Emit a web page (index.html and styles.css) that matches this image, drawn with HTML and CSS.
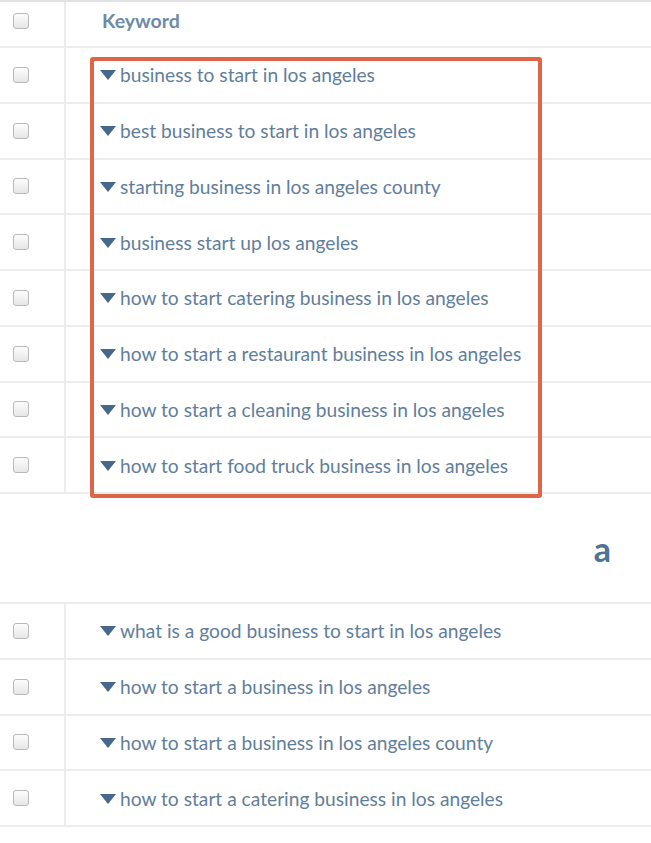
FILE: index.html
```html
<!DOCTYPE html>
<html>
<head>
<meta charset="utf-8">
<link rel="stylesheet" href="styles.css">
</head>
<body>
<div class="kw-table top">
  <div class="row head">
    <div class="cb-cell"><span class="cb"></span></div>
    <div class="kw-cell"><span class="head-label">Keyword</span></div>
  </div>
  <div class="rows">
    <div class="row"><div class="cb-cell"><span class="cb"></span></div><div class="kw-cell"><span class="tri"></span>business to start in los angeles</div></div>
    <div class="row"><div class="cb-cell"><span class="cb"></span></div><div class="kw-cell"><span class="tri"></span>best business to start in los angeles</div></div>
    <div class="row"><div class="cb-cell"><span class="cb"></span></div><div class="kw-cell"><span class="tri"></span>starting business in los angeles county</div></div>
    <div class="row"><div class="cb-cell"><span class="cb"></span></div><div class="kw-cell"><span class="tri"></span>business start up los angeles</div></div>
    <div class="row"><div class="cb-cell"><span class="cb"></span></div><div class="kw-cell"><span class="tri"></span>how to start catering business in los angeles</div></div>
    <div class="row"><div class="cb-cell"><span class="cb"></span></div><div class="kw-cell"><span class="tri"></span>how to start a restaurant business in los angeles</div></div>
    <div class="row"><div class="cb-cell"><span class="cb"></span></div><div class="kw-cell"><span class="tri"></span>how to start a cleaning business in los angeles</div></div>
    <div class="row"><div class="cb-cell"><span class="cb"></span></div><div class="kw-cell"><span class="tri"></span>how to start food truck business in los angeles</div></div>
    <div class="highlight"></div>
  </div>
</div>
<div class="label-a">a</div>
<div class="kw-table bottom">
  <div class="row"><div class="cb-cell"><span class="cb"></span></div><div class="kw-cell"><span class="tri"></span>what is a good business to start in los angeles</div></div>
  <div class="row"><div class="cb-cell"><span class="cb"></span></div><div class="kw-cell"><span class="tri"></span>how to start a business in los angeles</div></div>
  <div class="row"><div class="cb-cell"><span class="cb"></span></div><div class="kw-cell"><span class="tri"></span>how to start a business in los angeles county</div></div>
  <div class="row"><div class="cb-cell"><span class="cb"></span></div><div class="kw-cell"><span class="tri"></span>how to start a catering business in los angeles</div></div>
</div>
</body>
</html>
```
FILE: styles.css
```css
html, body {
  margin: 0;
  padding: 0;
  background: #fff;
}
body {
  width: 651px;
  font-family: Lato, "Open Sans", sans-serif;
  font-size: 19.2px;
  color: #5f7e9b;
}
.kw-table.top {
  border-top: 2px solid #e2e2e2;
}
.rows {
  position: relative;
}
.row {
  display: grid;
  grid-template-columns: 66px 1fr;
  height: 53.75px;
  border-bottom: 2px solid #ececec;
}
.row.head {
  height: 44px;
}
.row.head .cb-cell,
.row.head .kw-cell {
  padding-bottom: 7px;
}
.cb-cell {
  border-right: 2px solid #ececec;
  display: flex;
  align-items: center;
  padding-left: 13px;
}
.cb {
  width: 14px;
  height: 14px;
  border: 1px solid #b9b9b9;
  border-radius: 3px;
  background: linear-gradient(#fdfdfd, #e6e6e6);
  display: block;
}
.kw-cell {
  display: flex;
  align-items: center;
  padding-left: 34px;
  white-space: nowrap;
}
.head-label {
  font-weight: bold;
  color: #6d8aa6;
  padding-left: 2px;
  font-size: 19.5px;
}
.tri {
  width: 0;
  height: 0;
  border-left: 8px solid transparent;
  border-right: 8px solid transparent;
  border-top: 10px solid #45698b;
  margin-right: 4px;
  margin-top: 1px;
}
.highlight {
  position: absolute;
  left: 90px;
  top: 9px;
  width: 444px;
  height: 433px;
  border: 4px solid #dc6647;
  border-radius: 3px;
}
.label-a {
  height: 108px;
  display: flex;
  align-items: center;
  justify-content: flex-end;
  padding-right: 40px;
  font-size: 34px;
  font-weight: bold;
  color: #4d7396;
}
.kw-table.bottom {
  border-top: 2px solid #ececec;
}
```
